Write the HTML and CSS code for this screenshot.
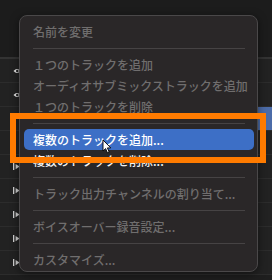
FILE: index.html
```html
<!DOCTYPE html>
<html lang="ja">
<head>
  <meta charset="UTF-8">
  <title>トラックメニュー</title>
  <link rel="stylesheet" href="styles.css">
</head>
<body>
  <div class="screen">
    <div class="tracks">
      <div class="head"></div>
      <div class="row"><svg class="eye" viewBox="0 0 8 6"><path d="M0.5 3 Q4 -1 7.5 3 Q4 7 0.5 3 Z" fill="#e6e6e6"/><circle cx="4.3" cy="3" r="1.3" fill="#222"/></svg></div>
      <div class="row"><svg class="eye" viewBox="0 0 8 6"><path d="M0.5 3 Q4 -1 7.5 3 Q4 7 0.5 3 Z" fill="#e6e6e6"/><circle cx="4.3" cy="3" r="1.3" fill="#222"/></svg></div>
      <div class="row selected"></div>
      <div class="row"></div>
      <div class="row"><svg class="play" viewBox="0 0 8 8"><rect x="0" y="0" width="1.5" height="8" fill="#d0d0d0"/><path d="M3 1 L7.5 4 L3 7 Z" fill="#d0d0d0"/></svg></div>
      <div class="row"><svg class="play" viewBox="0 0 8 8"><rect x="0" y="0" width="1.5" height="8" fill="#d0d0d0"/><path d="M3 1 L7.5 4 L3 7 Z" fill="#d0d0d0"/></svg></div>
      <div class="row"><svg class="play" viewBox="0 0 8 8"><rect x="0" y="0" width="1.5" height="8" fill="#d0d0d0"/><path d="M3 1 L7.5 4 L3 7 Z" fill="#d0d0d0"/></svg></div>
      <div class="row"><svg class="play" viewBox="0 0 8 8"><rect x="0" y="0" width="1.5" height="8" fill="#d0d0d0"/><path d="M3 1 L7.5 4 L3 7 Z" fill="#d0d0d0"/></svg></div>
      <div class="row"><svg class="play" viewBox="0 0 8 8"><rect x="0" y="0" width="1.5" height="8" fill="#d0d0d0"/><path d="M3 1 L7.5 4 L3 7 Z" fill="#d0d0d0"/></svg></div>
    </div>

    <div class="menu">
      <div class="item">名前を変更</div>
      <div class="sep"></div>
      <div class="item">１つのトラックを追加</div>
      <div class="item">オーディオサブミックストラックを追加</div>
      <div class="item">１つのトラックを削除</div>
      <div class="sep"></div>
      <div class="item active">複数のトラックを追加...</div>
      <div class="item enabled">複数のトラックを削除...</div>
      <div class="sep"></div>
      <div class="item">トラック出力チャンネルの割り当て...</div>
      <div class="sep"></div>
      <div class="item">ボイスオーバー録音設定...</div>
      <div class="sep"></div>
      <div class="item">カスタマイズ...</div>
    </div>

    <div class="focus"></div>

    <svg class="cursor" viewBox="0 0 10 15">
      <path d="M1 1 L1 12 L3.6 9.6 L5.4 13.8 L7.2 13 L5.4 8.9 L8.8 8.9 Z" fill="#fff" stroke="#000" stroke-width="0.9" stroke-linejoin="round"/>
    </svg>
  </div>
</body>
</html>
```

FILE: styles.css
```css
body {
  margin: 0;
  background: #1e1e1e;
  font-family: "Noto Sans CJK JP", "Noto Sans", sans-serif;
}

.screen {
  position: relative;
  width: 272px;
  height: 280px;
  overflow: hidden;
  background: #1e1e1e;
}

/* track list behind the menu */
.tracks {
  display: flex;
  flex-direction: column;
}

.head {
  height: 57px;
  border-bottom: 2px solid #333;
  background: #1c1c1c;
}

.row {
  height: 24px;
  display: flex;
  align-items: center;
  padding-left: 13px;
  border-bottom: 1px solid #2c2c2c;
  background: #222;
  box-sizing: border-box;
}

.row.selected {
  background: linear-gradient(to right, #222 0, #222 258px, #4c6ca8 258px);
}

.eye {
  width: 8px;
  height: 6px;
}

.play {
  width: 7px;
  height: 7px;
}

/* context menu */
.menu {
  position: absolute;
  left: 19px;
  top: 15px;
  width: 239px;
  height: 257px;
  box-sizing: border-box;
  padding: 5px 3px 0 4px;
  background: #2a2728;
  border: 1px solid #4a4849;
  border-radius: 8px;
  box-shadow: 0 2px 8px rgba(0, 0, 0, 0.5);
}

.item {
  height: 21px;
  line-height: 21px;
  padding-left: 9px;
  font-size: 12px;
  font-weight: 500;
  color: #706e6e;
  border-radius: 5px;
  white-space: nowrap;
}

.item.active {
  background: #3d6fc6;
  color: #fff;
}

.item.enabled {
  color: #f2f2f2;
}

.sep {
  height: 1px;
  margin: 6px 9px 5px 9px;
  background: #464344;
}

/* orange highlight frame */
.focus {
  position: absolute;
  left: 10px;
  top: 113px;
  width: 256px;
  height: 50px;
  box-sizing: border-box;
  border: 6px solid #ff7b00;
}

.cursor {
  position: absolute;
  left: 102px;
  top: 139px;
  width: 10px;
  height: 15px;
}
```
